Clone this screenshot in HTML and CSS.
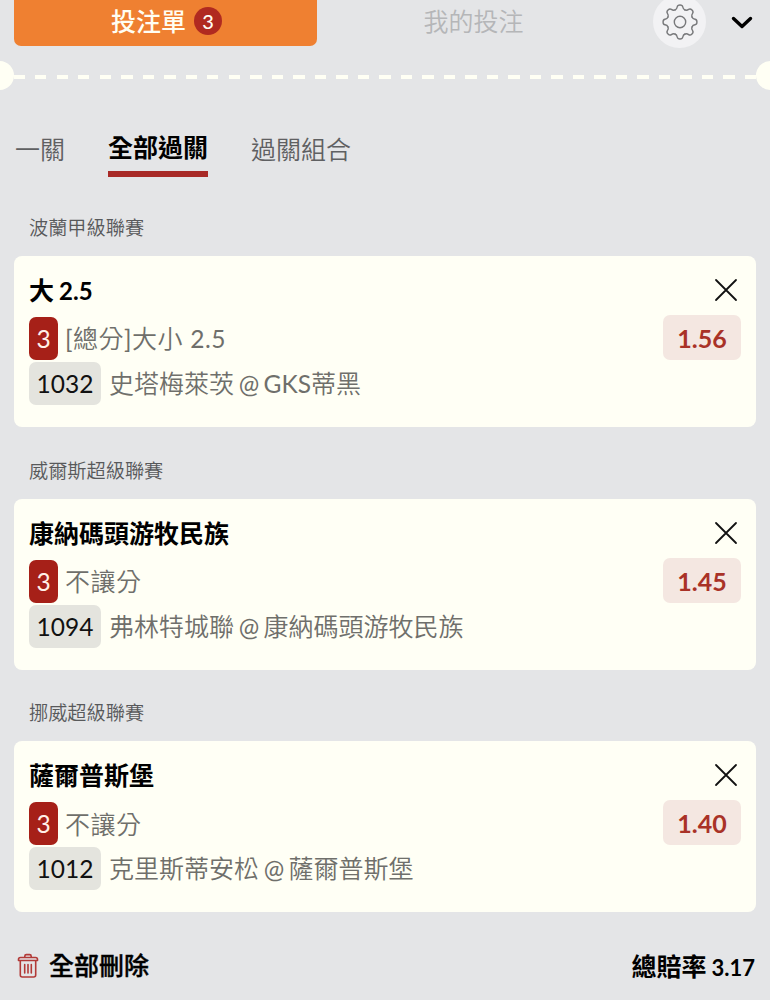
FILE: index.html
```html
<!DOCTYPE html>
<html lang="zh-Hant">

<head>
    <meta charset="UTF-8">
    <meta name="viewport" content="width=device-width, initial-scale=1.0">
    <title>投注單</title>
    <link rel="stylesheet" href="styles.css">
</head>

<body>

    <header class="header">
        <button class="main-tab active">投注單<span class="count">3</span></button>
        <button class="main-tab">我的投注</button>
        <button class="settings">
            <svg width="38" height="38" viewBox="-19 -19 38 38">
                <defs>
                    <path id="tooth" d="M-5-12C-3.4-12.6-3-13.6-2.8-15C-2.4-17.6 2.4-17.6 2.8-15C3-13.6 3.4-12.6 5-12" />
                </defs>
                <use href="#tooth" />
                <use href="#tooth" transform="rotate(45)" />
                <use href="#tooth" transform="rotate(90)" />
                <use href="#tooth" transform="rotate(135)" />
                <use href="#tooth" transform="rotate(180)" />
                <use href="#tooth" transform="rotate(225)" />
                <use href="#tooth" transform="rotate(270)" />
                <use href="#tooth" transform="rotate(315)" />
                <circle r="5.7" />
            </svg>
        </button>
        <button class="collapse">
            <svg width="22" height="14" viewBox="0 0 22 14">
                <path d="M2.5 3.5L11 11.5L19.5 3.5" />
            </svg>
        </button>
    </header>

    <div class="divider">
        <span class="notch"></span>
        <span class="dashes"></span>
        <span class="notch"></span>
    </div>

    <nav class="tabs">
        <a class="tab">一關</a>
        <a class="tab active">全部過關</a>
        <a class="tab">過關組合</a>
    </nav>

    <main class="bets">
        <section class="bet">
            <h2 class="league">波蘭甲級聯賽</h2>
            <div class="card">
                <div class="info">
                    <h3 class="pick">大 <span class="num">2.5</span></h3>
                    <div class="row"><span class="tag red">3</span><span class="market"><span class="latin">[</span>總分<span class="latin">]</span>大小 <span class="latin">2.5</span></span></div>
                    <div class="row"><span class="tag">1032</span><span class="teams">史塔梅萊茨 <span class="latin">@ GKS</span>蒂黑</span></div>
                </div>
                <div class="side">
                    <svg class="close" width="24" height="24" viewBox="0 0 24 24"><path d="M2 2L22 22M22 2L2 22" /></svg>
                    <span class="odds">1.56</span>
                </div>
            </div>
        </section>

        <section class="bet">
            <h2 class="league">威爾斯超級聯賽</h2>
            <div class="card">
                <div class="info">
                    <h3 class="pick">康納碼頭游牧民族</h3>
                    <div class="row"><span class="tag red">3</span><span class="market">不讓分</span></div>
                    <div class="row"><span class="tag">1094</span><span class="teams">弗林特城聯 <span class="latin">@ </span>康納碼頭游牧民族</span></div>
                </div>
                <div class="side">
                    <svg class="close" width="24" height="24" viewBox="0 0 24 24"><path d="M2 2L22 22M22 2L2 22" /></svg>
                    <span class="odds">1.45</span>
                </div>
            </div>
        </section>

        <section class="bet">
            <h2 class="league">挪威超級聯賽</h2>
            <div class="card">
                <div class="info">
                    <h3 class="pick">薩爾普斯堡</h3>
                    <div class="row"><span class="tag red">3</span><span class="market">不讓分</span></div>
                    <div class="row"><span class="tag">1012</span><span class="teams">克里斯蒂安松 <span class="latin">@ </span>薩爾普斯堡</span></div>
                </div>
                <div class="side">
                    <svg class="close" width="24" height="24" viewBox="0 0 24 24"><path d="M2 2L22 22M22 2L2 22" /></svg>
                    <span class="odds">1.40</span>
                </div>
            </div>
        </section>
    </main>

    <footer class="footer">
        <button class="clear">
            <svg width="22" height="26" viewBox="0 0 22 26">
                <path d="M1.5 7.5Q1.5 5.5 3.5 5.5H18.5Q20.5 5.5 20.5 7.5V8.5H1.5ZM7.8 5.5V4.2Q7.8 2.6 9.4 2.6H12.6Q14.2 2.6 14.2 4.2V5.5M3.3 8.5V23Q3.3 25 5.3 25H16.7Q18.7 25 18.7 23V8.5M7.7 12.5V21M11 12.5V21M14.3 12.5V21" />
            </svg>
            全部刪除
        </button>
        <span class="total">總賠率 <span class="total-value">3.17</span></span>
    </footer>

</body>

</html>
```

FILE: styles.css
```css
* {
    box-sizing: border-box;
}

body {
    margin: 0;
    height: 1000px;
    overflow: hidden;
    background-color: #e4e5e7;
    font-family: Lato, "Noto Sans CJK TC", sans-serif;
    font-size: 25px;
    color: #000;
}

button {
    padding: 0;
    border: none;
    background: none;
    font: inherit;
    color: inherit;
}

svg {
    display: block;
    fill: none;
    stroke-linecap: round;
    stroke-linejoin: round;
}

.header {
    display: flex;
    height: 46px;
    padding-left: 14px;
}

.main-tab {
    display: flex;
    align-items: center;
    justify-content: center;
    width: 303px;
    height: 46px;
    padding-bottom: 4px;
    color: #b5b6b8;
    font-weight: 350;
    line-height: 36px;
}

.main-tab + .main-tab {
    width: 313px;
}

.main-tab.active {
    padding-left: 2px;
    background-color: #ef8031;
    border-radius: 0 0 7px 7px;
    color: #fffef3;
    font-weight: 500;
}

.count {
    width: 28px;
    height: 28px;
    margin-left: 8px;
    border-radius: 50%;
    background-color: #b02a20;
    font-size: 20px;
    line-height: 28px;
    text-align: center;
}

.settings {
    display: flex;
    align-items: center;
    justify-content: center;
    width: 53px;
    height: 53px;
    margin: -5px 0 0 23px;
    border-radius: 50%;
    background-color: #f2f2f4;
}

.settings svg {
    stroke: #77787a;
    stroke-width: 1.4;
}

.collapse {
    height: 44px;
    margin-left: 25px;
}

.collapse svg {
    stroke: #000;
    stroke-width: 3.4;
}

.divider {
    display: flex;
    align-items: center;
    height: 29px;
    margin: 15px -15px 0;
}

.notch {
    width: 29px;
    height: 29px;
    border-radius: 50%;
    background-color: #fffff4;
}

.dashes {
    flex: 1;
    height: 4px;
    margin-top: 3px;
    background: repeating-linear-gradient(90deg, #fffff4 0 11px, transparent 11px 21.5px);
}

.tabs {
    display: flex;
    gap: 43px;
    height: 87px;
    padding: 42px 0 0 15px;
}

.tab {
    height: 45px;
    color: #5f6062;
    font-weight: 350;
    line-height: 35px;
}

.tab.active {
    border-bottom: 6px solid #a82a27;
    color: #000;
    font-weight: 700;
    line-height: 30px;
}

.bets {
    padding: 37px 14px 0;
}

.bet {
    height: 242.5px;
}

.league {
    margin: 0;
    height: 42px;
    padding-left: 15px;
    color: #58595b;
    font-size: 19.2px;
    font-weight: 350;
    line-height: 28px;
}

.card {
    display: flex;
    justify-content: space-between;
    height: 171px;
    padding: 16px 15px 0;
    border-radius: 8px;
    background-color: #fffff5;
}

.pick {
    margin: 0 0 9px;
    height: 36px;
    font-size: 25px;
    font-weight: 700;
    line-height: 36px;
    word-spacing: -1px;
}

.num {
    font-size: 24px;
}

.row {
    display: flex;
    align-items: center;
    height: 43px;
    margin-bottom: 2px;
    color: #6f6f6b;
    font-weight: 350;
    line-height: 44px;
    white-space: nowrap;
}

.latin {
    font-size: 24.5px;
    font-weight: 400;
}

.tag {
    width: 72px;
    height: 43px;
    margin-right: 8px;
    border-radius: 7px;
    background-color: #e4e4de;
    color: #111;
    font-size: 24.5px;
    font-weight: 400;
    text-align: center;
}

.tag.red {
    width: 29px;
    margin-right: 7px;
    background-color: #a62018;
    color: #fff0e8;
}

.market {
    letter-spacing: 0.5px;
}

.teams {
    word-spacing: -2px;
}

.side {
    display: flex;
    flex-direction: column;
    align-items: flex-end;
    padding-top: 6px;
}

.close {
    margin-right: 3px;
    stroke: #111;
    stroke-width: 1.8;
}

.odds {
    width: 78px;
    height: 45px;
    margin-top: 13px;
    border-radius: 7px;
    background-color: #f4e7e1;
    color: #a93227;
    font-weight: 700;
    line-height: 46px;
    text-align: center;
}

.footer {
    display: flex;
    align-items: center;
    justify-content: space-between;
    height: 36px;
    margin-top: 5px;
    padding: 0 15px 0 17px;
}

.clear {
    display: flex;
    align-items: center;
    gap: 10px;
    font-weight: 500;
    line-height: 36px;
    -webkit-text-stroke: 0.4px #000;
}

.clear svg {
    stroke: #b23a38;
    stroke-width: 1.6;
}

.total {
    font-weight: 700;
    word-spacing: -1px;
}

.total-value {
    font-size: 22px;
}
```
